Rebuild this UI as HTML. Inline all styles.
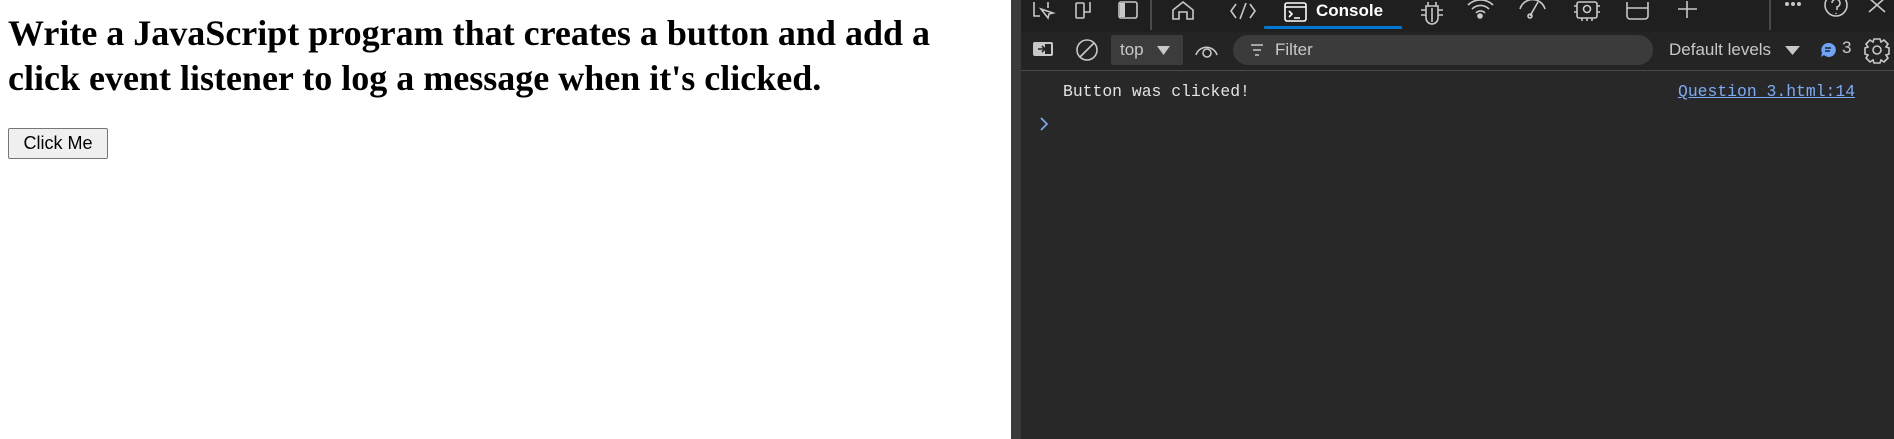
<!DOCTYPE html>
<html><head><meta charset="utf-8"><style>
*{margin:0;padding:0;box-sizing:border-box}
body{width:1894px;height:439px;overflow:hidden;position:relative;background:#fff;font-family:"Liberation Sans",sans-serif}
.a{position:absolute;white-space:nowrap}
h1{position:absolute;left:8px;top:11px;font:bold 36px/45px "Liberation Serif",serif;color:#000;white-space:nowrap}
.btn{position:absolute;left:8px;top:128px;width:100px;height:31px;background:#efefef;border:1px solid #767676;border-radius:2px;font:18px/29px "Liberation Sans",sans-serif;text-align:center;color:#000}
.stripe{position:absolute;left:1011px;top:0;width:10px;height:439px;background:#3a3a3a}
.dt{position:absolute;left:1021px;top:0;width:873px;height:439px;background:#282828}
.bar1{position:absolute;left:1021px;top:0;width:873px;height:32px;background:#1f1f1f}
.bar2{position:absolute;left:1021px;top:32px;width:873px;height:38px;background:#242424}
.sep{position:absolute;left:1021px;top:70px;width:873px;height:1px;background:#4a4a4a}
svg{position:absolute;overflow:visible}
.mono{font-family:"Liberation Mono",monospace;font-size:16.4px}
</style></head><body>
<h1>Write a JavaScript program that creates a button and add a<br>click event listener to log a message when it's clicked.</h1>
<div class="btn">Click Me</div>
<div class="stripe"></div>
<div class="dt"></div>
<div class="bar1"></div>
<div class="bar2"></div>
<div class="sep"></div>
<svg width="1894" height="439" style="left:0;top:0" fill="none" stroke="#c8c8c8" stroke-width="1.6">
<path d="M1034 2v14h6M1048 2v6M1041 9l7 9 1-4 4-1z"/>
<rect x="1076" y="3" width="8" height="15" rx="1"/><path d="M1084 12h6V2"/>
<rect x="1119" y="2" width="18" height="16" rx="2"/><rect x="1120" y="3" width="5" height="14" fill="#c8c8c8" stroke="none"/>
<path d="M1151 0v30" stroke="#555"/>
<path d="M1173 19v-9l10-8 10 8v9h-6v-7h-8v7z"/>
<path d="M1236 4l-5 7 5 7M1250 4l5 7-5 7M1246 3l-6 16"/>
<rect x="1285" y="3" width="21" height="18" rx="2" stroke="#fff"/><path d="M1285 7h21M1289 11l3 3-3 3M1294 18h6" stroke="#fff"/>
<path d="M1426 6h12v12a6 6 0 0 1-12 0zM1432 8v14M1421 10h5M1438 10h5M1421 15h5M1438 15h5M1428 6v-4M1436 6v-4"/>
<path d="M1468 5a18 18 0 0 1 25 0M1472 9a12 12 0 0 1 17 0M1476 13a6 6 0 0 1 9 0"/><circle cx="1480" cy="16" r="2" fill="#c8c8c8"/>
<path d="M1520 9a13 13 0 0 1 25 0M1538 2l-8 14"/><circle cx="1530" cy="16" r="2"/>
<rect x="1577" y="2" width="20" height="16" rx="2"/><circle cx="1587" cy="9" r="3.5"/><path d="M1582 18v3M1587 18v3M1592 18v3M1574 6h3M1574 12h3M1597 6h3M1597 12h3"/>
<path d="M1627 2v14a3 3 0 0 0 3 3h15a3 3 0 0 0 3-3V2M1627 8h21"/>
<path d="M1687 1v17M1678 9h19"/>
<path d="M1770 0v30" stroke="#555"/>
<circle cx="1787" cy="4" r="1.2" fill="#c8c8c8"/><circle cx="1793" cy="4" r="1.2" fill="#c8c8c8"/><circle cx="1799" cy="4" r="1.2" fill="#c8c8c8"/>
<circle cx="1836" cy="5" r="11"/><path d="M1832 3a4 4 0 1 1 5 4v3M1836 13v1"/>
<path d="M1869 -2l16 14M1885 -2l-16 14"/>
<rect x="1033" y="42" width="20" height="14" rx="2" fill="#c8c8c8" stroke="none"/><rect x="1045" y="44" width="6" height="10" fill="#242424" stroke="none"/><path d="M1038 49h6M1042 46l3 3-3 3" stroke="#242424"/>
<circle cx="1087" cy="50" r="10"/><path d="M1080 57l14-14"/>
<rect x="1111" y="35" width="72" height="30" rx="2" fill="#3c3c3c" stroke="none"/>
<path d="M1157 46h13l-6.5 9z" fill="#c8c8c8" stroke="none"/>
<path d="M1196 55a11 11 0 0 1 21 0"/><circle cx="1207" cy="53" r="4"/>
<rect x="1233" y="35" width="420" height="30" rx="15" fill="#3b3b3b" stroke="none"/>
<path d="M1251 45h12M1253 50h8M1255 55h4"/>
<path d="M1785 46h15l-7.5 9z" fill="#c8c8c8" stroke="none"/>
<path d="M1828 43a7 7 0 1 1-4 12l-3 2 1-4a7 7 0 0 1 6-10z" fill="#6ea4f6" stroke="none"/><path d="M1825 48h6M1825 51h5" stroke="#242424" stroke-width="1.4"/>
<circle cx="1877" cy="50" r="4"/><path d="M1874 39h6l1 3 3-2 4 4-2 3 3 1v6l-3 1 2 3-4 4-3-2-1 3h-6l-1-3-3 2-4-4 2-3-3-1v-6l3-1-2-3 4-4 3 2z"/>
<path d="M1041 118l6 6-6 6" stroke="#7cacf8"/>
</svg>
<div class="a" style="left:1264px;top:26px;width:138px;height:3px;background:#0078d4;border-radius:1px"></div>
<div class="a" style="left:1316px;top:0;font:bold 17px/22px 'Liberation Sans',sans-serif;color:#fff">Console</div>
<div class="a" style="left:1120px;top:40px;font:17px/20px 'Liberation Sans',sans-serif;color:#c8c8c8">top</div>
<div class="a" style="left:1275px;top:40px;font:17px/20px 'Liberation Sans',sans-serif;color:#c8c8c8">Filter</div>
<div class="a" style="left:1669px;top:40px;font:17px/20px 'Liberation Sans',sans-serif;color:#c8c8c8">Default levels</div>
<div class="a" style="left:1842px;top:38px;font:17px/20px 'Liberation Sans',sans-serif;color:#c8c8c8">3</div>
<div class="a mono" style="left:1063px;top:82px;color:#e3e3e3;line-height:20px">Button was clicked!</div>
<div class="a mono" style="left:1678px;top:82px;color:#7cacf8;line-height:20px;text-decoration:underline">Question_3.html:14</div>
</body></html>
